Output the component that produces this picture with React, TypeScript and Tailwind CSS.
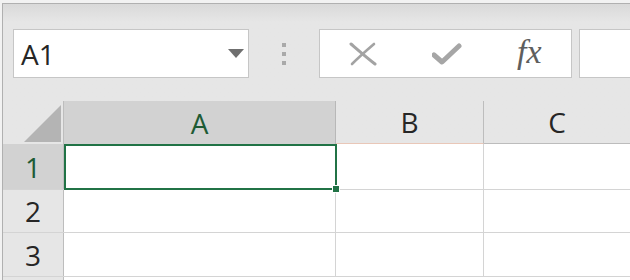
import React from "react";

const font = { fontFamily: '"Open Sans", "Noto Sans", "DejaVu Sans", sans-serif' };

const Row = ({ n, selected, h }: { n: number; selected?: boolean; h: string }) => (
  <div className={`flex shrink-0 ${h} border-b border-[#d4d4d4]`}>
    <div
      className={`w-[61px] shrink-0 flex items-center justify-center border-r border-[#bdbdbd] text-[28px] leading-none ${
        selected ? "bg-[#d2d2d2] text-[#1e5b35]" : "bg-[#e6e6e6] text-[#262626]"
      }`}
    >
      {n}
    </div>
    <div className="w-[272px] shrink-0 bg-white border-r border-[#d4d4d4]" />
    <div className="w-[148px] shrink-0 bg-white border-r border-[#d4d4d4]" />
    <div className="flex-1 bg-white" />
  </div>
);

const App = () => {
  return (
    <div className="w-[630px] h-[280px] overflow-hidden bg-[#f2f2f2] pl-[2px] pt-[3px]" style={font}>
      <div className="h-full border-l border-t border-[#b0b0b0] bg-gradient-to-b from-[#d9d9d9] to-[#e6e6e6] to-[18px] flex flex-col">
        {/* formula bar */}
        <div className="flex shrink-0 items-start pt-[25px] pl-[10px] h-[97px]">
          <div className="w-[236px] h-[49px] bg-white border border-[#c6c6c6] flex items-center justify-between pl-[7px] pr-[3px]">
            <span className="text-[28px] leading-none text-[#262626]">A1</span>
            <svg width="16" height="9" viewBox="0 0 16 9" className="mr-[1px]">
              <path d="M0 0 H16 L8 9 Z" fill="#6f6f6f" />
            </svg>
          </div>
          <div className="w-[70px] h-[49px] flex flex-col items-center justify-center gap-[5px]">
            <div className="w-[4px] h-[4px] bg-[#a9a9a9]" />
            <div className="w-[4px] h-[4px] bg-[#a9a9a9]" />
            <div className="w-[4px] h-[4px] bg-[#a9a9a9]" />
          </div>
          <div className="w-[253px] h-[49px] bg-white border border-[#c6c6c6] flex items-center">
            <svg width="28" height="26" viewBox="0 0 28 26" className="ml-[29px]">
              <path d="M2 3 C9 9 17 16 26 23" stroke="#a3a3a3" strokeWidth="3" strokeLinecap="round" fill="none" />
              <path d="M25 3 C18 9 10 16 3 23" stroke="#a3a3a3" strokeWidth="2.6" strokeLinecap="round" fill="none" />
            </svg>
            <svg width="30" height="22" viewBox="0 0 30 22" className="ml-[55px]">
              <path d="M2 12 L10 19 L27 3" stroke="#a6a6a6" strokeWidth="5" strokeLinecap="round" strokeLinejoin="round" fill="none" />
            </svg>
            <span
              className="ml-[55px] text-[34px] leading-none italic text-[#5e5e5e] -mt-[4px]"
              style={{ fontFamily: '"Liberation Serif", "DejaVu Serif", serif' }}
            >
              fx
            </span>
          </div>
          <div className="ml-[7px] flex-1 h-[49px] bg-white border border-[#c6c6c6] border-r-0" />
        </div>

        {/* grid */}
        <div className="flex flex-col flex-1 relative">
          <div className="flex shrink-0 h-[43px]">
            <div className="w-[61px] shrink-0 flex items-end justify-end pr-[2px] pb-[2px] border-r border-[#bdbdbd]">
              <svg width="37" height="37" viewBox="0 0 37 37">
                <path d="M37 0 V37 H0 Z" fill="#b4b4b4" />
              </svg>
            </div>
            <div className="w-[272px] shrink-0 bg-[#d2d2d2] border-r border-[#b8b8b8] flex items-center justify-center text-[28px] leading-none text-[#1e5b35]">
              A
            </div>
            <div className="w-[148px] shrink-0 border-r border-[#bdbdbd] border-b border-b-[#e9c7b8] flex items-center justify-center text-[28px] leading-none text-[#262626]">
              B
            </div>
            <div className="flex-1 border-b border-[#bcbcbc] flex items-center justify-center text-[28px] leading-none text-[#262626]">
              C
            </div>
          </div>
          <Row n={1} selected h="h-[46px]" />
          <Row n={2} h="h-[43px]" />
          <Row n={3} h="h-[44px]" />
          <div className="flex flex-1">
            <div className="w-[61px] shrink-0 bg-[#e6e6e6] border-r border-[#bdbdbd]" />
            <div className="flex-1 bg-white" />
          </div>

          {/* active cell */}
          <div className="absolute left-[61px] top-[43px] w-[273px] h-[46px] border-2 border-[#217346] pointer-events-none">
            <div className="absolute -right-[5px] -bottom-[5px] w-[8px] h-[8px] bg-[#217346] border border-white" />
          </div>
        </div>
      </div>
    </div>
  );
};

export default App;
